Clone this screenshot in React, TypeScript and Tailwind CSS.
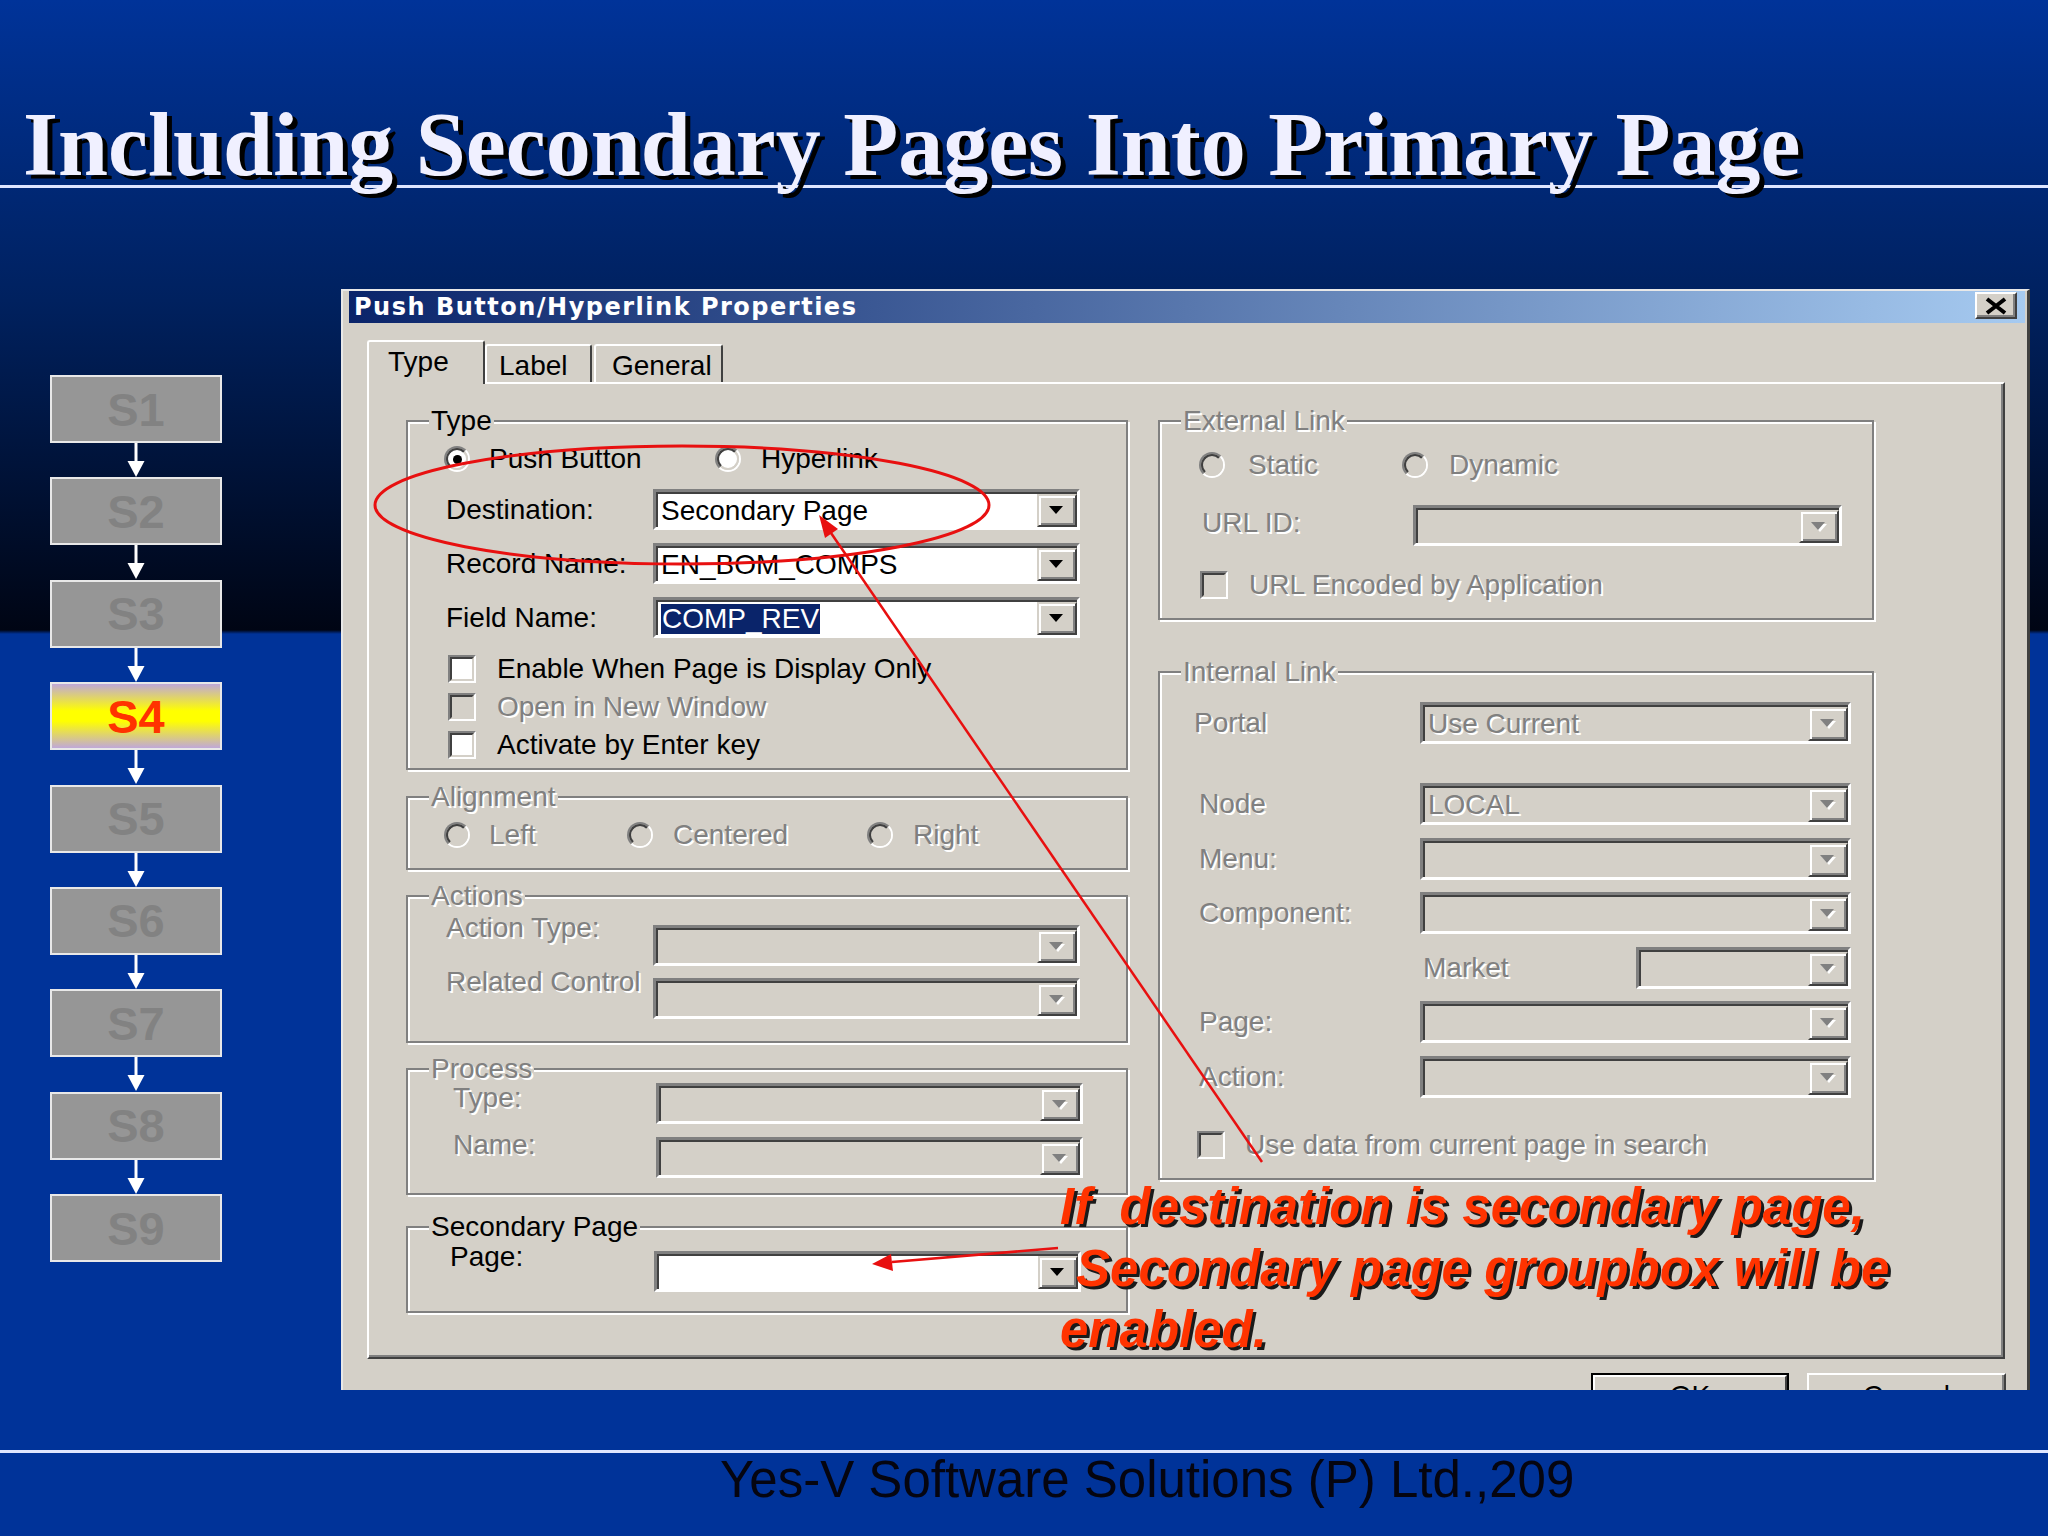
import React from 'react';

// engraved (disabled) and normal text colours
const DIS = 'text-[#808080] [text-shadow:2px_2px_0_#ffffff]';
const EN = 'text-black';

function ArrowGlyph({ disabled }: { disabled?: boolean }) {
  return (
    <svg width="18" height="12" viewBox="0 0 18 12">
      {disabled && <path d="M3 3h14l-7 8z" fill="#ffffff" />}
      <path d="M1 1h14L8 9z" fill={disabled ? '#808080' : '#000000'} />
    </svg>
  );
}

function Combo({
  value,
  disabled,
  white,
  w,
  h = 'h-[41px]',
  mt = '',
  selected,
}: {
  value?: string;
  disabled?: boolean;
  white?: boolean;
  w: string;
  h?: string;
  mt?: string;
  selected?: boolean;
}) {
  return (
    <div
      className={`${w} ${h} ${mt} shrink-0 flex border-[3px] border-t-[#808080] border-l-[#808080] border-b-white border-r-white shadow-[inset_2px_2px_0_#404040] pt-[2px] pl-[2px] ${
        white ? 'bg-white' : 'bg-[#d4d0c8]'
      }`}
    >
      <div className="flex-1 flex items-center pl-[3px] text-[28px] leading-none overflow-hidden whitespace-nowrap">
        {selected ? (
          <span className="bg-[#0a246a] text-white px-[1px] py-[1px]">{value}</span>
        ) : (
          <span className={disabled ? DIS : EN}>{value}</span>
        )}
      </div>
      <div className="w-[40px] h-full flex items-center justify-center bg-[#d4d0c8] border-2 border-t-[#d4d0c8] border-l-[#d4d0c8] border-r-[#404040] border-b-[#404040] shadow-[inset_2px_2px_0_#ffffff,inset_-2px_-2px_0_#808080]">
        <ArrowGlyph disabled={disabled} />
      </div>
    </div>
  );
}

function Radio({ checked, disabled }: { checked?: boolean; disabled?: boolean }) {
  return (
    <div className="w-[26px] h-[26px] shrink-0 rounded-full border-2 border-t-[#808080] border-l-[#808080] border-b-white border-r-white">
      <div
        className={`w-full h-full rounded-full border-2 border-t-[#404040] border-l-[#404040] border-b-[#d4d0c8] border-r-[#d4d0c8] flex items-center justify-center ${
          disabled ? 'bg-[#d4d0c8]' : 'bg-white'
        }`}
      >
        {checked && <div className="w-[9px] h-[9px] rounded-full bg-black" />}
      </div>
    </div>
  );
}

function Check({ disabled }: { disabled?: boolean }) {
  return (
    <div className="w-[28px] h-[28px] shrink-0 border-2 border-t-[#808080] border-l-[#808080] border-b-white border-r-white">
      <div
        className={`w-full h-full border-2 border-t-[#404040] border-l-[#404040] border-b-[#d4d0c8] border-r-[#d4d0c8] ${
          disabled ? 'bg-[#d4d0c8]' : 'bg-white'
        }`}
      />
    </div>
  );
}

function Label({ text, disabled, cls = '' }: { text: string; disabled?: boolean; cls?: string }) {
  return (
    <div className={`text-[28px] leading-[30px] whitespace-nowrap ${disabled ? DIS : EN} ${cls}`}>{text}</div>
  );
}

function Group({
  title,
  disabled,
  className,
  children,
}: {
  title: string;
  disabled?: boolean;
  className: string;
  children?: React.ReactNode;
}) {
  return (
    <fieldset
      className={`border-2 border-[#808080] shadow-[2px_2px_0_#ffffff,inset_2px_2px_0_#ffffff] ${className}`}
    >
      <legend
        className={`ml-[21px] px-[2px] text-[28px] leading-[28px] bg-[#d4d0c8] ${disabled ? DIS : EN}`}
      >
        {title}
      </legend>
      {children}
    </fieldset>
  );
}

function DownArrow() {
  return (
    <div className="h-[34.4px] flex justify-center">
      <svg width="20" height="34" viewBox="0 0 20 34">
        <path d="M10 0v19" stroke="#ffffff" strokeWidth="3" />
        <path d="M1.5 18h17L10 34z" fill="#ffffff" />
      </svg>
    </div>
  );
}

const steps = ['S1', 'S2', 'S3', 'S4', 'S5', 'S6', 'S7', 'S8', 'S9'];

export default function App() {
  return (
    <div className="relative w-[2048px] h-[1536px] overflow-hidden bg-[linear-gradient(to_bottom,#003399_0px,#00215f_300px,#000514_630px,#003399_634px,#003399_100%)]">
      {/* Title */}
      <div className="h-[188px] border-b-[3px] border-[#dfe6ff]">
        <h1 className="pt-[100px] pl-[23px] font-['Liberation_Serif','Times_New_Roman',serif] font-bold text-[90px] leading-none text-[#f0f0ff] [text-shadow:5px_4px_0_#000000] whitespace-nowrap">
          Including Secondary Pages Into Primary Page
        </h1>
      </div>

      {/* Main */}
      <div className="h-[1262px] pt-[101px] flex items-start">
        {/* step boxes */}
        <div className="pl-[50px] pt-[86px] w-[222px] shrink-0 flex flex-col">
          {steps.map((s, i) => (
            <React.Fragment key={s}>
              {i > 0 && <DownArrow />}
              <div
                className={`w-[172px] h-[68px] border-2 border-[#e8e8e8] flex items-center justify-center font-['Liberation_Sans',Arial,sans-serif] font-bold text-[47px] leading-none ${
                  s === 'S4'
                    ? 'bg-[linear-gradient(to_bottom,#c0a8d8_0%,#ffff00_42%,#ffff00_58%,#c0a8d8_100%)] text-[#ff3300]'
                    : 'bg-[#969696] text-[#828282]'
                }`}
              >
                {s}
              </div>
            </React.Fragment>
          ))}
        </div>

        {/* Dialog */}
        <div className="ml-[119px] w-[1689px] h-[1101px] overflow-hidden bg-[#d4d0c8] border-t-2 border-l-2 border-r-[3px] border-t-[#e8e8e8] border-l-[#e8e8e8] border-r-[#404040] pl-[6px] pr-[2px] font-['Liberation_Sans',Arial,sans-serif]">
          {/* title bar */}
          <div className="h-[32px] flex items-start justify-between bg-[linear-gradient(to_right,#0a246a,#a6caf0)]">
            <div className="pl-[5px] h-full flex items-center font-['DejaVu_Sans',sans-serif] font-bold text-[24px] tracking-[1.5px] text-white whitespace-nowrap">
              Push Button/Hyperlink Properties
            </div>
            <div className="mt-[1px] mr-[8px] w-[42px] h-[27px] bg-[#d4d0c8] border-2 border-t-white border-l-white border-r-[#404040] border-b-[#404040] shadow-[inset_-2px_-2px_0_#808080] flex items-center justify-center">
              <svg width="24" height="18" viewBox="0 0 24 18">
                <path d="M3 2L21 16M21 2L3 16" stroke="#000000" strokeWidth="4" />
              </svg>
            </div>
          </div>

          {/* tabs */}
          <div className="mt-[17px] ml-[18px] h-[42px] flex items-end text-[28px] leading-none">
            <div className="relative z-10 w-[118px] h-[44px] -mb-[2px] bg-[#d4d0c8] border-t-2 border-l-2 border-r-2 border-t-white border-l-white border-r-[#404040] rounded-t-[3px] pl-[19px] pt-[6px]">
              Type
            </div>
            <div className="w-[107px] h-[38px] border-t-2 border-l-2 border-r-2 border-t-white border-l-white border-r-[#404040] rounded-t-[3px] pl-[12px] pt-[6px]">
              Label
            </div>
            <div className="ml-[2px] w-[129px] h-[38px] border-t-2 border-l-2 border-r-2 border-t-white border-l-white border-r-[#404040] rounded-t-[3px] pl-[16px] pt-[6px]">
              General
            </div>
          </div>

          {/* tab panel */}
          <div className="ml-[18px] w-[1638px] h-[977px] border-2 border-t-white border-l-white border-r-[#404040] border-b-[#404040] shadow-[inset_-2px_-2px_0_#808080] pl-[37px] pt-[23px] flex gap-[30px]">
            {/* left column */}
            <div className="w-[722px] flex flex-col">
              <Group title="Type" className="h-[363px]">
                <div className="mt-[11px] ml-[36px] h-[26px] flex items-center">
                  <div className="w-[271px] flex items-center">
                    <Radio checked />
                    <Label text="Push Button" cls="ml-[19px]" />
                  </div>
                  <Radio />
                  <Label text="Hyperlink" cls="ml-[20px]" />
                </div>
                <div className="mt-[17px] flex items-start">
                  <Label text="Destination:" cls="ml-[38px] w-[207px] mt-[6px]" />
                  <Combo white value="Secondary Page" w="w-[427px]" />
                </div>
                <div className="mt-[13px] flex items-start">
                  <Label text="Record Name:" cls="ml-[38px] w-[207px] mt-[6px]" />
                  <Combo white value="EN_BOM_COMPS" w="w-[427px]" />
                </div>
                <div className="mt-[13px] flex items-start">
                  <Label text="Field Name:" cls="ml-[38px] w-[207px] mt-[6px]" />
                  <Combo white selected value="COMP_REV" w="w-[427px]" />
                </div>
                <div className="mt-[16px] ml-[40px] h-[30px] flex items-center">
                  <Check />
                  <Label text="Enable When Page is Display Only" cls="ml-[21px]" />
                </div>
                <div className="mt-[8px] ml-[40px] h-[30px] flex items-center">
                  <Check disabled />
                  <Label text="Open in New Window" disabled cls="ml-[21px]" />
                </div>
                <div className="mt-[8px] ml-[40px] h-[30px] flex items-center">
                  <Check />
                  <Label text="Activate by Enter key" cls="ml-[21px]" />
                </div>
              </Group>

              <Group title="Alignment" disabled className="mt-[13px] h-[87px]">
                <div className="mt-[11px] ml-[36px] h-[26px] flex items-center">
                  <div className="w-[183px] flex items-center">
                    <Radio disabled />
                    <Label text="Left" disabled cls="ml-[19px]" />
                  </div>
                  <div className="w-[240px] flex items-center">
                    <Radio disabled />
                    <Label text="Centered" disabled cls="ml-[20px]" />
                  </div>
                  <Radio disabled />
                  <Label text="Right" disabled cls="ml-[20px]" />
                </div>
              </Group>

              <Group title="Actions" disabled className="mt-[12px] h-[161px]">
                <div className="mt-[3px] flex items-start">
                  <Label text="Action Type:" disabled cls="ml-[38px] w-[207px]" />
                  <Combo disabled w="w-[427px]" mt="mt-[12px]" />
                </div>
                <div className="mt-[1px] flex items-start">
                  <Label text="Related Control" disabled cls="ml-[38px] w-[207px]" />
                  <Combo disabled w="w-[427px]" mt="mt-[11px]" />
                </div>
              </Group>

              <Group title="Process" disabled className="mt-[12px] h-[140px]">
                <div className="flex items-start">
                  <Label text="Type:" disabled cls="ml-[45px] w-[203px]" />
                  <Combo disabled w="w-[427px]" />
                </div>
                <div className="mt-[6px] flex items-start">
                  <Label text="Name:" disabled cls="ml-[45px] w-[203px]" />
                  <Combo disabled w="w-[427px]" mt="mt-[7px]" />
                </div>
              </Group>

              <Group title="Secondary Page" className="mt-[18px] h-[100px]">
                <div className="mt-[1px] flex items-start">
                  <Label text="Page:" cls="ml-[42px] w-[204px]" />
                  <Combo white w="w-[427px]" mt="mt-[9px]" />
                </div>
              </Group>
            </div>

            {/* right column */}
            <div className="w-[716px] flex flex-col">
              <Group title="External Link" disabled className="h-[213px]">
                <div className="mt-[17px] ml-[39px] h-[26px] flex items-center">
                  <div className="w-[203px] flex items-center">
                    <Radio disabled />
                    <Label text="Static" disabled cls="ml-[23px]" />
                  </div>
                  <Radio disabled />
                  <Label text="Dynamic" disabled cls="ml-[21px]" />
                </div>
                <div className="mt-[27px] flex items-start">
                  <Label text="URL ID:" disabled cls="ml-[42px] w-[211px] mt-[3px]" />
                  <Combo disabled w="w-[429px]" />
                </div>
                <div className="mt-[24px] ml-[40px] h-[30px] flex items-center">
                  <Check disabled />
                  <Label text="URL Encoded by Application" disabled cls="ml-[21px]" />
                </div>
              </Group>

              <Group title="Internal Link" disabled className="mt-[38px] h-[522px]">
                <div className="mt-[16px] flex items-start">
                  <Label text="Portal" disabled cls="ml-[34px] w-[226px] mt-[6px]" />
                  <Combo disabled value="Use Current" w="w-[431px]" h="h-[42px]" />
                </div>
                <div className="mt-[39px] flex items-start">
                  <Label text="Node" disabled cls="ml-[39px] w-[221px] mt-[6px]" />
                  <Combo disabled value="LOCAL" w="w-[431px]" h="h-[42px]" />
                </div>
                <div className="mt-[13px] flex items-start">
                  <Label text="Menu:" disabled cls="ml-[39px] w-[221px] mt-[6px]" />
                  <Combo disabled w="w-[431px]" h="h-[42px]" />
                </div>
                <div className="mt-[12px] flex items-start">
                  <Label text="Component:" disabled cls="ml-[39px] w-[221px] mt-[6px]" />
                  <Combo disabled w="w-[431px]" h="h-[42px]" />
                </div>
                <div className="mt-[13px] flex items-start">
                  <Label text="Market" disabled cls="ml-[263px] w-[213px] mt-[6px]" />
                  <Combo disabled w="w-[215px]" h="h-[42px]" />
                </div>
                <div className="mt-[12px] flex items-start">
                  <Label text="Page:" disabled cls="ml-[39px] w-[221px] mt-[6px]" />
                  <Combo disabled w="w-[431px]" h="h-[42px]" />
                </div>
                <div className="mt-[13px] flex items-start">
                  <Label text="Action:" disabled cls="ml-[39px] w-[221px] mt-[6px]" />
                  <Combo disabled w="w-[431px]" h="h-[42px]" />
                </div>
                <div className="mt-[32px] ml-[37px] h-[30px] flex items-center">
                  <Check disabled />
                  <Label text="Use data from current page in search" disabled cls="ml-[20px]" />
                </div>
              </Group>
            </div>
          </div>

          {/* buttons, cut off by the slide */}
          <div className="mt-[14px] mr-[19px] flex justify-end gap-[18px] text-[28px]">
            <div className="w-[198px] h-[46px] border-2 border-black">
              <div className="w-full h-full border-2 border-t-white border-l-white border-r-[#404040] border-b-[#404040] flex items-center justify-center">
                OK
              </div>
            </div>
            <div className="w-[199px] h-[46px] border-2 border-t-white border-l-white border-r-[#404040] border-b-[#404040] shadow-[inset_-2px_-2px_0_#808080] flex items-center justify-center">
              Cancel
            </div>
          </div>
        </div>
      </div>

      {/* Footer */}
      <div className="border-t-[3px] border-[#dfe6ff] pt-[1px] pl-[720px] font-['Liberation_Sans',Arial,sans-serif] text-[51px] leading-none text-[#050510] whitespace-nowrap">
        Yes-V Software Solutions (P) Ltd.,209
      </div>

      {/* red annotations */}
      <svg className="absolute inset-0 pointer-events-none" width="2048" height="1536" viewBox="0 0 2048 1536">
        <ellipse cx="682" cy="505" rx="307" ry="59" fill="none" stroke="#e81010" strokeWidth="3" />
        <path d="M1262 1162L831 533" stroke="#e81010" strokeWidth="2.5" />
        <path d="M819 515L838 529L825 538z" fill="#e81010" />
        <path d="M1058 1248L892 1262" stroke="#e81010" strokeWidth="2.5" />
        <path d="M872 1264L893 1271L891 1254z" fill="#e81010" />
      </svg>
      <div className="absolute left-[1060px] top-[1176px] font-['Liberation_Sans',Arial,sans-serif] font-bold italic text-[51px] leading-[61.5px] text-[#ff3300] [text-shadow:3px_3px_0_#1a1a1a] whitespace-pre">
        <div>If  destination is secondary page,</div>
        <div className="pl-[16px]">Secondary page groupbox will be</div>
        <div>enabled.</div>
      </div>
    </div>
  );
}
